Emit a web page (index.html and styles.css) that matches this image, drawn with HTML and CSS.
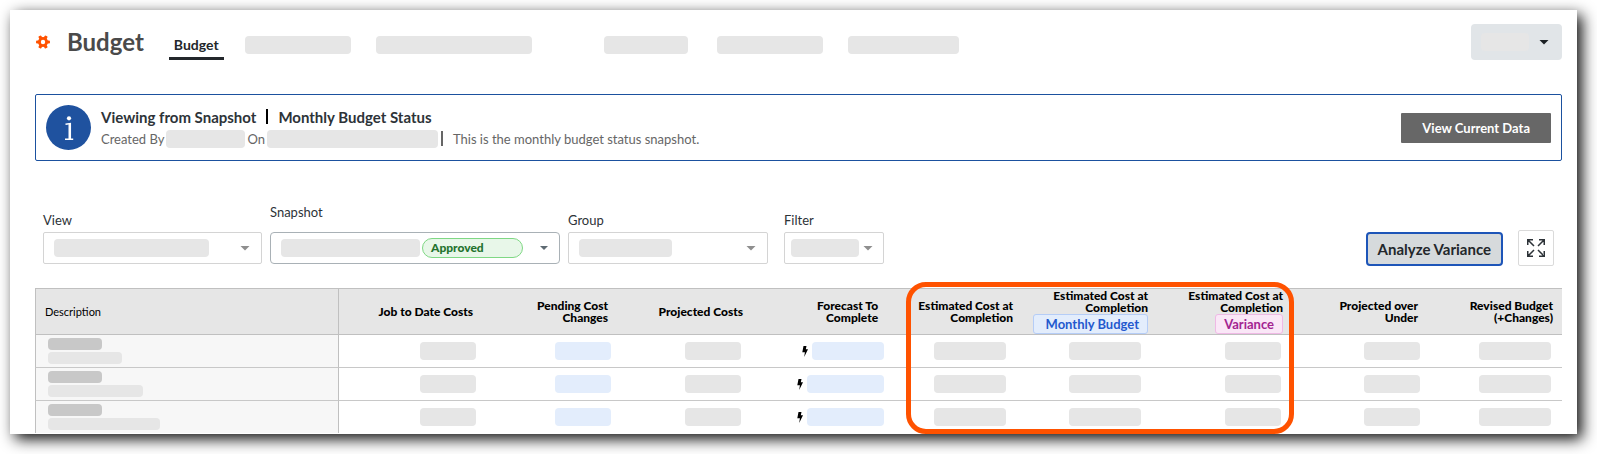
FILE: index.html
```html
<!DOCTYPE html>
<html lang="en">
<head>
<meta charset="utf-8">
<title>Budget</title>
<link rel="stylesheet" href="styles.css">
</head>
<body>
<main class="card">
  <header class="topbar">
    <svg class="gear" viewBox="0 0 14 14" aria-hidden="true">
      <g fill="#ff5200">
        <circle cx="7" cy="7" r="5"/>
        <rect x="0" y="5.4" width="14" height="3.2" rx="1"/>
        <rect x="0" y="5.4" width="14" height="3.2" rx="1" transform="rotate(60 7 7)"/>
        <rect x="0" y="5.4" width="14" height="3.2" rx="1" transform="rotate(120 7 7)"/>
      </g>
      <circle cx="7" cy="7" r="2.2" fill="#fff"/>
    </svg>
    <h1 class="title">Budget</h1>
    <nav class="tabs">
      <a class="tab" href="#" aria-current="page">Budget</a>
      <span class="ghost tab-a"></span>
      <span class="ghost tab-b"></span>
      <span class="ghost tab-c"></span>
      <span class="ghost tab-a"></span>
      <span class="ghost tab-d"></span>
    </nav>
    <button class="menu-button" type="button" aria-label="Menu"><span class="ghost menu-ghost"></span><span class="caret caret-dark"></span></button>
  </header>

  <section class="banner">
    <svg class="info" viewBox="0 0 45 45" aria-hidden="true">
      <circle cx="22.500" cy="22.500" r="22.500" fill="#1f529f"/>
      <circle cx="23" cy="13.300" r="2.100" fill="#fff"/>
      <path d="M19.500 19.300 L24.300 18.600 V33.800 M19 34.200 H27.200" fill="none" stroke="#fff" stroke-width="1.500"/>
      <path d="M22.500 19 H24.800 V34 H22.500 Z" fill="#fff"/>
    </svg>
    <div class="banner-text">
      <p class="banner-title"><span>Viewing from Snapshot</span><i class="rule"></i><span>Monthly Budget Status</span></p>
      <p class="banner-meta"><span>Created By</span><span class="ghost by-ghost"></span><span>On</span><span class="ghost on-ghost"></span><i class="rule rule-gray"></i><span>This is the monthly budget status snapshot.</span></p>
    </div>
    <button class="dark-button" type="button">View Current Data</button>
  </section>

  <section class="filters">
    <div class="field field-view">
      <label for="view">View</label>
      <div class="control"><select id="view"><option></option></select><span class="value"><span class="ghost value-a"></span><span class="caret"></span></span></div>
    </div>
    <div class="field field-snapshot">
      <label for="snapshot">Snapshot</label>
      <div class="control"><select id="snapshot"><option></option></select><span class="value"><span class="ghost value-b"></span><span class="approved">Approved</span><span class="caret caret-small"></span></span></div>
    </div>
    <div class="field field-group">
      <label for="group">Group</label>
      <div class="control"><select id="group"><option></option></select><span class="value"><span class="ghost value-c"></span><span class="caret"></span></span></div>
    </div>
    <div class="field field-filter">
      <label for="filter">Filter</label>
      <div class="control"><select id="filter"><option></option></select><span class="value"><span class="ghost value-d"></span><span class="caret"></span></span></div>
    </div>
    <div class="actions">
      <button class="analyze" type="button">Analyze Variance</button>
      <button class="expand" type="button" aria-label="Full screen">
        <svg viewBox="0 0 18 18" aria-hidden="true"><path d="M0.750 6 V0.750 H6 M0.750 0.750 L7 7 M12 0.750 H17.250 V6 M17.250 0.750 L11 7 M0.750 12 V17.250 H6 M0.750 17.250 L7 11 M12 17.250 H17.250 V12 M17.250 17.250 L11 11" fill="none" stroke="#2d3338" stroke-width="1.500"/></svg>
      </button>
    </div>
  </section>

  <div class="table-wrap">
    <table class="budget">
      <thead>
        <tr>
          <th>Description</th>
          <th>Job to Date Costs</th>
          <th>Pending Cost<br>Changes</th>
          <th>Projected Costs</th>
          <th>Forecast To<br>Complete</th>
          <th>Estimated Cost at<br>Completion</th>
          <th class="tagged">Estimated Cost at<br>Completion<span class="tag tag-blue">Monthly Budget</span></th>
          <th class="tagged">Estimated Cost at<br>Completion<span class="tag tag-pink">Variance</span></th>
          <th>Projected over<br>Under</th>
          <th>Revised Budget<br>(+Changes)</th>
        </tr>
      </thead>
      <tbody>
        <tr>
          <td><span class="ghost name"></span><span class="ghost detail"></span></td>
          <td><span class="ghost cell"></span></td>
          <td><span class="ghost cell blue"></span></td>
          <td><span class="ghost cell"></span></td>
          <td><svg class="bolt" viewBox="0 0 6 11" aria-hidden="true"><path d="M1.500 0 H4.500 L3.800 3.300 H6 L2.200 11 L2.900 6.200 H0.300 Z"/></svg><span class="ghost cell wide blue"></span></td>
          <td><span class="ghost cell wide"></span></td>
          <td><span class="ghost cell wide"></span></td>
          <td><span class="ghost cell"></span></td>
          <td><span class="ghost cell"></span></td>
          <td><span class="ghost cell wide"></span></td>
        </tr>
        <tr>
          <td><span class="ghost name"></span><span class="ghost detail detail-mid"></span></td>
          <td><span class="ghost cell"></span></td>
          <td><span class="ghost cell blue"></span></td>
          <td><span class="ghost cell"></span></td>
          <td><svg class="bolt" viewBox="0 0 6 11" aria-hidden="true"><path d="M1.500 0 H4.500 L3.800 3.300 H6 L2.200 11 L2.900 6.200 H0.300 Z"/></svg><span class="ghost cell wider blue"></span></td>
          <td><span class="ghost cell wide"></span></td>
          <td><span class="ghost cell wide"></span></td>
          <td><span class="ghost cell"></span></td>
          <td><span class="ghost cell"></span></td>
          <td><span class="ghost cell wide"></span></td>
        </tr>
        <tr>
          <td><span class="ghost name"></span><span class="ghost detail detail-long"></span></td>
          <td><span class="ghost cell"></span></td>
          <td><span class="ghost cell blue"></span></td>
          <td><span class="ghost cell"></span></td>
          <td><svg class="bolt" viewBox="0 0 6 11" aria-hidden="true"><path d="M1.500 0 H4.500 L3.800 3.300 H6 L2.200 11 L2.900 6.200 H0.300 Z"/></svg><span class="ghost cell wider blue"></span></td>
          <td><span class="ghost cell wide"></span></td>
          <td><span class="ghost cell wide"></span></td>
          <td><span class="ghost cell"></span></td>
          <td><span class="ghost cell"></span></td>
          <td><span class="ghost cell wide"></span></td>
        </tr>
      </tbody>
    </table>
    <div class="highlight"></div>
  </div>
</main>
</body>
</html>
```
FILE: styles.css
```css
* { box-sizing: border-box; }

body {
  margin: 0;
  padding: 10px 20px 20px 10px;
  background: #fff;
  color: #2d3338;
  font-family: Lato, "Liberation Sans", sans-serif;
  font-size: 13px;
  line-height: 20px;
}

h1, p { margin: 0; }
button, select { font-family: inherit; }

.card {
  padding: 14px 15px 1px 25px;
  background: #fff;
  box-shadow: 5px 5px 14px rgba(0, 0, 0, 0.95);
}

.ghost {
  display: block;
  flex: none;
  height: 18px;
  border-radius: 4px;
  background: #e6e6e6;
}

.caret {
  flex: none;
  width: 10px;
  height: 5px;
  background: #8f8f8f;
  clip-path: polygon(0 0, 100% 0, 50% 100%);
}
.caret-dark { background: #1c2125; }
.caret-small { width: 8px; height: 4px; background: #5e6b73; }

/* Top bar */
.topbar { display: flex; align-items: center; height: 36px; }
.gear { width: 14px; height: 14px; margin-left: 1px; }
.title {
  margin-left: 17px;
  color: #4a4a4a;
  font-size: 24px;
  font-weight: 700;
  line-height: 36px;
}
.tabs { display: flex; align-items: center; flex: 1; margin-left: 25px; }
.tab {
  padding: 4px 5px 2px;
  margin: 7px 21px 0 0;
  border-bottom: 3px solid #23272b;
  color: #23272b;
  font-size: 14px;
  font-weight: 700;
  text-decoration: none;
}
.tab-a { width: 106px; margin-right: 25px; }
.tab-b { width: 156px; margin-right: 72px; }
.tab-c { width: 84px; margin-right: 29px; }
.tab-d { width: 111px; }
.tabs .ghost { margin-top: 6px; }
.menu-button {
  display: flex;
  align-items: center;
  gap: 10px;
  height: 36px;
  padding: 0 13px 0 10px;
  border: 0;
  border-radius: 4px;
  background: #e1e5e8;
}
.menu-ghost { width: 48px; }

/* Snapshot banner */
.banner {
  display: flex;
  align-items: center;
  margin-top: 34px;
  padding: 10px;
  border: 1px solid #1b519f;
  border-radius: 2px;
}
.info { width: 45px; height: 45px; }
.banner-text { flex: 1; margin-left: 10px; }
.banner-title, .banner-meta { display: flex; align-items: center; }
.banner-title { gap: 10px; margin-bottom: 2px; font-size: 15px; font-weight: 700; }
.banner-meta { gap: 2px; color: #666; }
.rule { width: 2px; height: 15px; background: #000; }
.rule-gray { margin: 0 8px 0 1px; background: #666; }
.by-ghost { width: 79px; }
.on-ghost { width: 171px; }
.dark-button {
  height: 30px;
  padding: 0 21px;
  border: 0;
  border-radius: 1px;
  background: #676767;
  color: #fff;
  font-size: 13px;
  font-weight: 700;
}

/* Filters */
.filters {
  display: flex;
  align-items: flex-end;
  gap: 8px;
  margin-top: 42px;
  padding: 0 8px 0 8px;
}
.field { display: flex; flex-direction: column; gap: 2px; margin-bottom: 2px; }
.control { display: grid; }
.control select, .value { grid-area: 1 / 1; }
.control select {
  width: 100%;
  height: 32px;
  border: 1px solid #d4d4d4;
  border-radius: 2px;
  background: #fff;
  appearance: none;
}
.value {
  display: flex;
  align-items: center;
  padding: 0 12px 0 11px;
  pointer-events: none;
}
.value .caret { margin-left: auto; }
.field-view { width: 219px; }
.field-snapshot { width: 290px; gap: 10px; margin-top: -1px; }
.field-snapshot select { border-color: #a9b1b6; border-radius: 4px; }
.field-group { width: 200px; }
.field-filter { width: 100px; margin-left: 8px; }
.field-filter .value { padding: 0 11px 0 7px; }
.value-a { width: 155px; }
.value-b { width: 139px; }
.value-c { width: 93px; }
.value-d { width: 68px; }
.approved {
  width: 101px;
  height: 20px;
  margin-left: 2px;
  padding-left: 8px;
  border: 1px solid #7fd884;
  border-radius: 10px;
  background: #e8f7e9;
  color: #23732e;
  font-size: 12px;
  font-weight: 900;
  line-height: 18px;
}
.actions { display: flex; align-items: flex-end; gap: 15px; margin-left: auto; }
.analyze {
  height: 34px;
  padding: 0 10px;
  border: 2px solid #1d55b8;
  border-radius: 4px;
  background: #d6dadc;
  color: #23272b;
  font-size: 15px;
  font-weight: 700;
}
.expand {
  display: grid;
  place-items: center;
  width: 36px;
  height: 36px;
  padding: 0;
  border: 1px solid #dadada;
  border-radius: 2px;
  background: #fff;
}
.expand svg { width: 18px; height: 18px; }

/* Budget table */
.table-wrap { position: relative; margin-top: 22px; }
.budget {
  width: 100%;
  border-collapse: separate;
  border-spacing: 0;
  table-layout: fixed;
}
.budget th {
  width: 8.84%;
  height: 47px;
  padding: 0 9px 0 0;
  border: solid #c0c0c0;
  border-width: 1px 0;
  background: #e6e6e6;
  color: #000;
  font-size: 12px;
  font-weight: 900;
  line-height: 12px;
  text-align: right;
  white-space: nowrap;
}
.budget th:first-child {
  width: 19.9%;
  padding-left: 9px;
  border-width: 1px;
  font-size: 11px;
  font-weight: 400;
  text-align: left;
}
.budget th:nth-child(2) { width: auto; }
.budget .tagged { vertical-align: bottom; }
.tag {
  display: block;
  width: fit-content;
  height: 20px;
  margin-left: auto;
  padding: 0 8px;
  border: 1px solid;
  border-radius: 3px;
  font-size: 13px;
  font-weight: 700;
  line-height: 18px;
}
.tag-blue { padding-left: 12px; border-color: #b5cdf7; background: #e3edfc; color: #2459ce; }
.tag-pink { border-color: #efb9e5; background: #fae7f7; color: #a32491; }

.budget td {
  height: 33px;
  padding: 0;
  border-bottom: 1px solid #c8c8c8;
  line-height: 0;
  text-align: right;
}
.budget tr:last-child td { height: 32px; border-bottom: 0; }
.budget td:first-child {
  padding-left: 12px;
  border-right: 1px solid #c0c0c0;
  border-left: 1px solid #c0c0c0;
  background: #f7f7f7;
}
.budget td:nth-child(2), .budget td:nth-child(3) { padding-right: 6px; }
.budget td:nth-child(4), .budget td:nth-child(8), .budget td:nth-child(10) { padding-right: 11px; }
.budget td:nth-child(5) { padding-right: 3px; }
.budget td:nth-child(6), .budget td:nth-child(7) { padding-right: 16px; }
.budget td:nth-child(9) { padding-right: 7px; }
.cell { display: inline-block; width: 56px; vertical-align: middle; }
.wide { width: 72px; }
.wider { width: 77px; }
.blue { background: #e3edfc; }
.bolt { width: 6px; height: 11px; margin-right: 4px; vertical-align: middle; }
.name, .detail { height: 12px; }
.name { width: 54px; margin-bottom: 2px; background: #c8c8c8; }
.detail { width: 74px; }
.detail-mid { width: 95px; }
.detail-long { width: 112px; }

.highlight {
  position: absolute;
  top: -6px;
  bottom: -1px;
  left: 57.03%;
  width: 25.4%;
  border: 5px solid #ff5200;
  border-radius: 20px;
  pointer-events: none;
}
```
